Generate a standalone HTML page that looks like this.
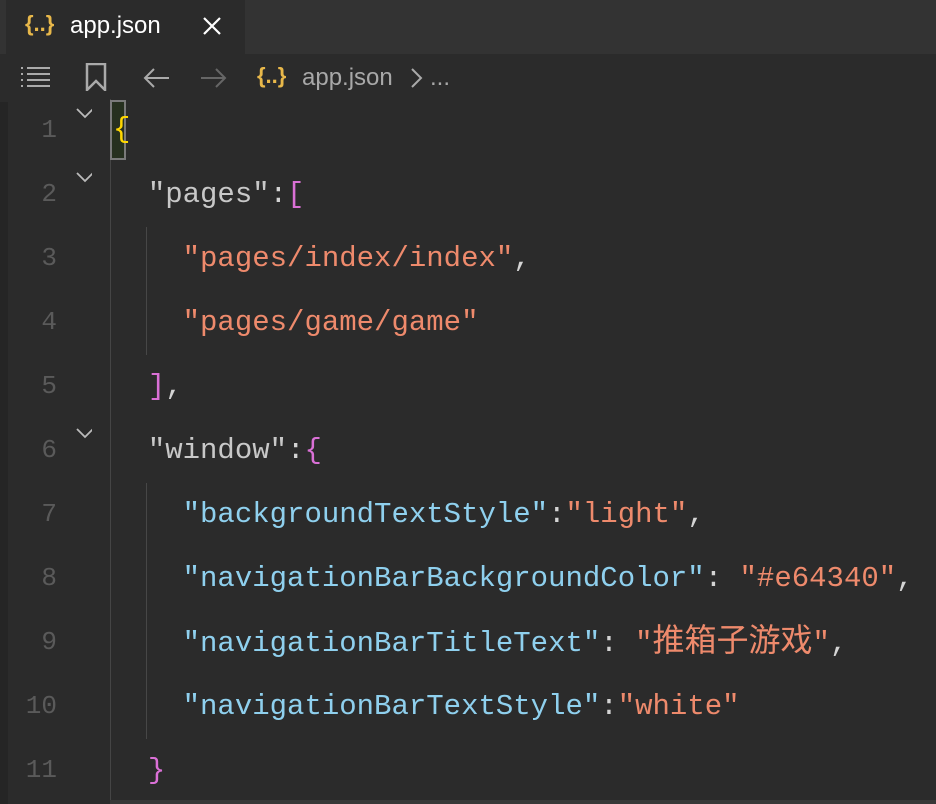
<!DOCTYPE html>
<html><head><meta charset="utf-8"><style>
body{margin:0;width:936px;height:804px;background:#2b2b2b;overflow:hidden;position:relative;font-family:"Liberation Sans",sans-serif}
.tabbar{position:absolute;left:0;top:0;width:936px;height:54px;background:#333333}
.tab{position:absolute;left:6px;top:0;width:239px;height:54px;background:#2b2b2b;color:#fff;font-size:24px}
.crumb{position:absolute;left:0;top:54px;width:936px;height:48px;background:#2b2b2b;color:#a8a8a8;font-size:24px}
.ln{position:absolute;left:0;width:57px;text-align:right;color:#5a5a5a;font-family:"Liberation Mono",monospace;font-size:26px}
.code{position:absolute;left:113px;white-space:pre;font-family:"Liberation Mono","Noto Sans CJK SC",monospace;font-size:29px;line-height:40px;height:40px;color:#d4d4d4}
.k{color:#8fd0ee}.s{color:#ee8a6c}.p{color:#da70d6}.y{color:#ffd700}.w{color:#c8c8c8}
.chev{position:absolute;left:76px;width:16px;height:16px}
.guide{position:absolute;width:1px;background:#474747}
</style></head><body>
<div class="tabbar"></div>
<div style="position:absolute;left:0;top:54px;width:8px;height:750px;background:#252525"></div>
<div class="tab">
 <span style="position:absolute;left:19px;top:11px;color:#e8b84a;font-size:22px;font-weight:bold">{..}</span>
 <span style="position:absolute;left:64px;top:12px">app.json</span>
 <svg style="position:absolute;left:197px;top:17px" width="18" height="18"><path d="M1 1L17 17M17 1L1 17" stroke="#fff" stroke-width="2.2"/></svg>
</div>
<div class="crumb">
 <svg style="position:absolute;left:20px;top:12px" width="32" height="22"><g stroke="#aaa" stroke-width="2"><path d="M1 2h2M7 2h23M1 8h2M7 8h23M1 14h2M7 14h23M1 20h2M7 20h23"/></g></svg>
 <svg style="position:absolute;left:85px;top:9px" width="22" height="28"><path d="M2 1h18v26l-9-9-9 9z" fill="none" stroke="#aaa" stroke-width="2.5"/></svg>
 <svg style="position:absolute;left:143px;top:14px" width="28" height="20"><path d="M26 10H2M11 1L2 10l9 9" fill="none" stroke="#aaa" stroke-width="2"/></svg>
 <svg style="position:absolute;left:199px;top:14px" width="28" height="20"><path d="M2 10h24M17 1l9 9-9 9" fill="none" stroke="#666" stroke-width="2"/></svg>
 <span style="position:absolute;left:257px;top:9px;color:#e8b84a;font-size:22px;font-weight:bold">{..}</span>
 <span style="position:absolute;left:302px;top:10px">app.json</span>
 <svg style="position:absolute;left:410px;top:14px" width="14" height="20"><path d="M2 1l9 9-9 9" fill="none" stroke="#aaa" stroke-width="2"/></svg>
 <span style="position:absolute;left:430px;top:10px">...</span>
</div>
<div style="position:absolute;left:110px;top:99px;width:1px;height:705px;background:#454545"></div>
<div style="position:absolute;left:110px;top:800px;width:826px;height:4px;background:#383838"></div>
<div style="position:absolute;left:110px;top:100px;width:16px;height:60px;border:2px solid #7a7a7a;box-sizing:border-box;background:#26301f"></div>
<div class="guide" style="left:146px;top:227px;height:128px"></div>
<div class="guide" style="left:146px;top:483px;height:256px"></div>
<svg class="chev" style="top:108px" width="18" height="12"><path d="M1 1l8 8 8-8" fill="none" stroke="#bbb" stroke-width="1.8"/></svg>
<svg class="chev" style="top:172px" width="18" height="12"><path d="M1 1l8 8 8-8" fill="none" stroke="#bbb" stroke-width="1.8"/></svg>
<svg class="chev" style="top:428px" width="18" height="12"><path d="M1 1l8 8 8-8" fill="none" stroke="#bbb" stroke-width="1.8"/></svg>
<div class="ln" style="top:115px">1</div>
<div class="ln" style="top:179px">2</div>
<div class="ln" style="top:243px">3</div>
<div class="ln" style="top:307px">4</div>
<div class="ln" style="top:371px">5</div>
<div class="ln" style="top:435px">6</div>
<div class="ln" style="top:499px">7</div>
<div class="ln" style="top:563px">8</div>
<div class="ln" style="top:627px">9</div>
<div class="ln" style="top:691px">10</div>
<div class="ln" style="top:755px">11</div>
<div class="code" style="top:110px"><span class="y">{</span></div>
<div class="code" style="top:175px">  <span class="w">"pages"</span>:<span class="p">[</span></div>
<div class="code" style="top:239px">    <span class="s">"pages/index/index"</span>,</div>
<div class="code" style="top:303px">    <span class="s">"pages/game/game"</span></div>
<div class="code" style="top:367px">  <span class="p">]</span>,</div>
<div class="code" style="top:431px">  <span class="w">"window"</span>:<span class="p">{</span></div>
<div class="code" style="top:495px">    <span class="k">"backgroundTextStyle"</span>:<span class="s">"light"</span>,</div>
<div class="code" style="top:559px">    <span class="k">"navigationBarBackgroundColor"</span>: <span class="s">"#e64340"</span>,</div>
<div class="code" style="top:623px">    <span class="k">"navigationBarTitleText"</span>: <span class="s">"<span style="font-size:32px;line-height:40px">推箱子游戏</span>"</span>,</div>
<div class="code" style="top:687px">    <span class="k">"navigationBarTextStyle"</span>:<span class="s">"white"</span></div>
<div class="code" style="top:751px">  <span class="p">}</span></div>
</body></html>
